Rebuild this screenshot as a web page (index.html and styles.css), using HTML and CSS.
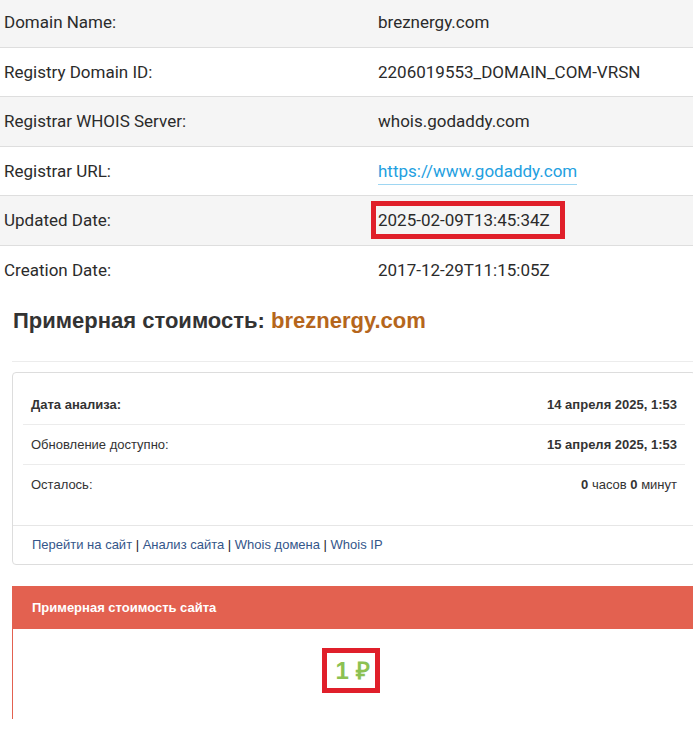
FILE: index.html
```html
<!DOCTYPE html>
<html lang="ru">
<head>
<meta charset="utf-8">
<title>breznergy.com</title>
<link rel="stylesheet" href="styles.css">
</head>
<body>
<div class="whois">
  <div class="row odd first"><div class="lbl">Domain Name:</div><div class="val">breznergy.com</div></div>
  <div class="row"><div class="lbl">Registry Domain ID:</div><div class="val">2206019553_DOMAIN_COM-VRSN</div></div>
  <div class="row odd"><div class="lbl">Registrar WHOIS Server:</div><div class="val">whois.godaddy.com</div></div>
  <div class="row"><div class="lbl">Registrar URL:</div><div class="val"><a class="link" href="#">https://www.godaddy.com</a></div></div>
  <div class="row odd"><div class="lbl">Updated Date:</div><div class="val"><span class="mark">2025-02-09T13:45:34Z</span></div></div>
  <div class="row last"><div class="lbl">Creation Date:</div><div class="val">2017-12-29T11:15:05Z</div></div>
</div>

<div class="estimate">
  <h2 class="title">Примерная стоимость: <span class="dom">breznergy.com</span></h2>
  <div class="hr"></div>

  <div class="panel">
    <div class="panel-body">
      <div class="trow"><span class="b">Дата анализа:</span><span class="b">14 апреля 2025, 1:53</span></div>
      <div class="trow"><span>Обновление доступно:</span><span class="b">15 апреля 2025, 1:53</span></div>
      <div class="trow"><span>Осталось:</span><span><b>0</b> часов <b>0</b> минут</span></div>
    </div>
    <div class="panel-footer"><a href="#">Перейти на сайт</a> | <a href="#">Анализ сайта</a> | <a href="#">Whois домена</a> | <a href="#">Whois IP</a></div>
  </div>

  <div class="rpanel">
    <div class="rpanel-head">Примерная стоимость сайта</div>
    <div class="rpanel-body">
      <span class="price">1 ₽</span>
    </div>
  </div>
</div>
</body>
</html>
```

FILE: styles.css
```css
html, body {
  margin: 0;
  padding: 0;
  background: #fff;
  overflow-x: hidden;
}

.whois {
  font-family: Roboto, "Noto Sans", sans-serif;
  font-size: 17px;
  color: #2b2b2b;
  margin-top: -2px;
}

.row {
  display: flex;
  align-items: center;
  height: 48.5px;
  border-bottom: 1px solid #dedede;
  background: #fff;
}

.row.odd { background: #f5f5f5; }
.row.last { border-bottom: none; }

.lbl {
  width: 374px;
  padding-left: 4px;
}

.val { flex: 1; }

.link {
  color: #23a0df;
  text-decoration: none;
  border-bottom: 1px solid #9ed6f2;
  padding-bottom: 3px;
}

.mark {
  display: inline-block;
  border: 5px solid #e01f2a;
  padding: 4px 10px 4px 2px;
  margin-left: -7px;
}

.estimate {
  font-family: "Liberation Sans", Arial, sans-serif;
  margin: 0 -3px 0 12px;
  padding-top: 12px;
}

.title {
  margin: 0;
  font-size: 22px;
  font-weight: bold;
  color: #333;
  line-height: 30px;
  padding-left: 1px;
}

.dom { color: #b5661c; }

.hr {
  height: 1px;
  background: #ececec;
  margin-top: 25px;
}

.panel {
  margin-top: 10px;
  border: 1px solid #dddddd;
  border-radius: 4px;
  font-size: 13px;
  color: #333;
}

.panel-body {
  padding: 11px 10px 21px;
}

.trow {
  display: flex;
  justify-content: space-between;
  align-items: center;
  height: 40px;
  padding: 0 8px;
  border-top: 1px solid #ececec;
  box-sizing: border-box;
}

.trow:first-child { border-top: none; }

.b { font-weight: bold; }

.panel-footer {
  border-top: 1px solid #e6e6e6;
  padding: 0 19px;
  height: 38px;
  line-height: 38px;
  color: #222;
}

.panel-footer a {
  color: #34568a;
  text-decoration: none;
}

.rpanel {
  margin-top: 21px;
  border-left: 1px solid #e36150;
  border-right: 1px solid #e36150;
}

.rpanel-head {
  background: #e36150;
  color: #fff;
  font-size: 13px;
  font-weight: bold;
  height: 43px;
  display: flex;
  align-items: center;
  padding-left: 19px;
}

.rpanel-body {
  height: 90px;
  display: flex;
  justify-content: center;
  align-items: flex-start;
  padding-top: 19px;
  box-sizing: border-box;
  padding-right: 6px;
}

.price {
  display: inline-block;
  border: 5px solid #e01f2a;
  padding: 5px 5px 5px 8px;
  font-size: 24px;
  font-weight: bold;
  color: #8cc152;
  line-height: 25px;
}
```
